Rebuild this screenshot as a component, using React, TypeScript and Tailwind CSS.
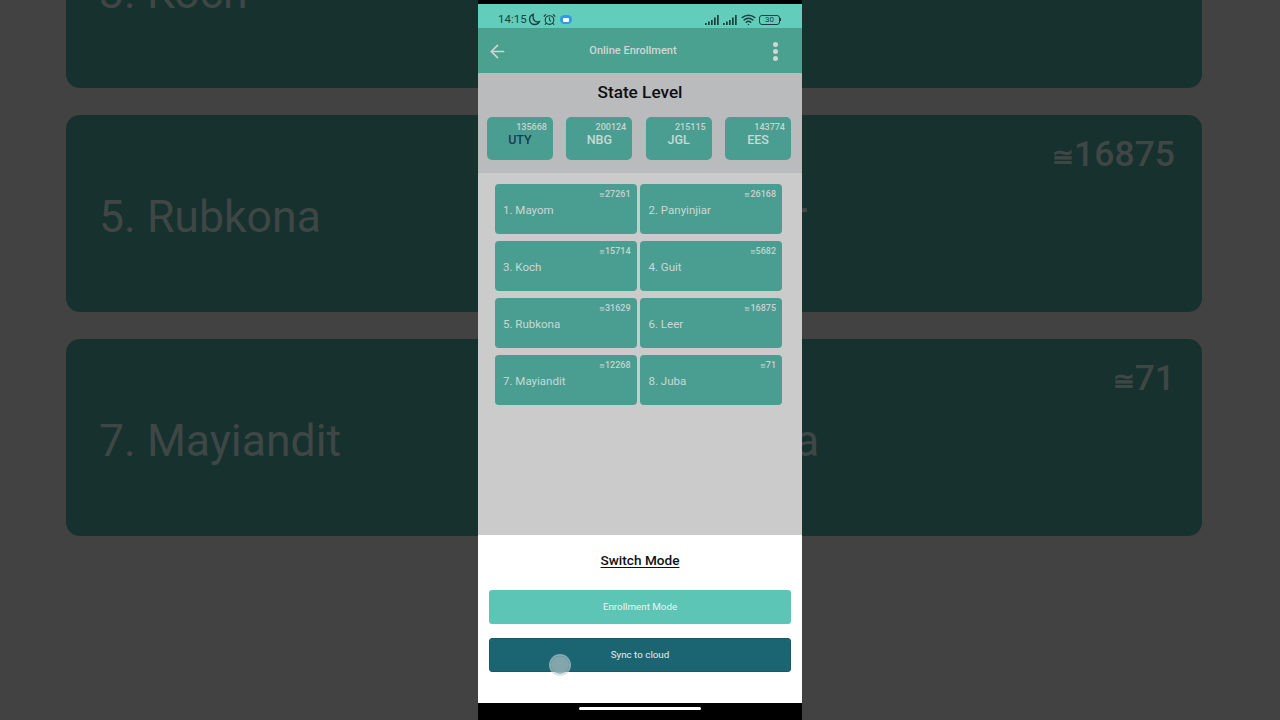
import { AlarmClock, ArrowLeft, Wifi } from 'lucide-react';

const districts = [
  { name: '1. Mayom', count: '27261' },
  { name: '2. Panyinjiar', count: '26168' },
  { name: '3. Koch', count: '15714' },
  { name: '4. Guit', count: '5682' },
  { name: '5. Rubkona', count: '31629' },
  { name: '6. Leer', count: '16875' },
  { name: '7. Mayiandit', count: '12268' },
  { name: '8. Juba', count: '71' },
];

const states = [
  { code: 'UTY', count: '135668', dark: true },
  { code: 'NBG', count: '200124' },
  { code: 'JGL', count: '215115' },
  { code: 'EES', count: '143774' },
];

function SignalBars() {
  return (
    <svg width="15" height="10" viewBox="0 0 15 10" fill="currentColor">
      <rect x="0" y="8" width="1.7" height="2" />
      <rect x="3" y="6.5" width="1.7" height="3.5" />
      <rect x="6" y="5" width="1.7" height="5" />
      <rect x="9" y="2.5" width="1.7" height="7.5" />
      <rect x="12" y="0" width="1.7" height="10" />
    </svg>
  );
}

function MoonGlyph() {
  return (
    <svg width="13" height="13" viewBox="0 0 13 13" fill="none" stroke="currentColor" strokeWidth="1.4" strokeLinecap="round">
      <path d="M5.2 1.4C2.9 2.3 1.4 4.4 1.6 6.9c.2 2.6 2.4 4.6 5 4.6 2 0 3.8-1.1 4.7-2.9-2.8.7-5.2-.6-6-3-.3-1.5-.4-3 -.1-4.2z" />
    </svg>
  );
}

// the blurred, enlarged copy of the video behind the phone
function BackdropCard({ name, count }: { name?: string; count?: string }) {
  return (
    <div className="h-[197px] rounded-[14px] bg-[#17312e] pt-[19px] pr-[27px] pl-[33px] text-[#3f4746]">
      <div className="flex h-[42px] items-center justify-end text-[35.5px] leading-none font-medium">
        {count && (
          <span>
            <span className="text-[26px] font-bold">≅</span>
            {count}
          </span>
        )}
      </div>
      <div className="mt-[15px] text-[44.6px] leading-[52px]">{name}</div>
    </div>
  );
}

export default function App() {
  return (
    <div className="relative h-[720px] w-[1280px] overflow-hidden bg-[#424242] font-['Roboto',sans-serif]">
      {/* Backdrop */}
      <div className="mt-[-109px] ml-[66px] grid w-[1136px] grid-cols-2 gap-x-[12px] gap-y-[27px]">
        <BackdropCard name="3. Koch" />
        <BackdropCard count="5682" />
        <BackdropCard name="5. Rubkona" />
        <BackdropCard name="6. Leer" count="16875" />
        <BackdropCard name="7. Mayiandit" />
        <BackdropCard name="8. Juba" count="71" />
      </div>

      {/* Phone */}
      <div className="absolute inset-y-0 left-[478px] flex w-[324px] flex-col bg-black pt-[4px]">
        <div className="flex h-[24px] shrink-0 items-center justify-between bg-[#62cdbb] pt-[7px] pr-[21px] pl-[20px] text-[#1c3f3c]">
          <div className="flex items-center">
            <span className="text-[11.5px]">14:15</span>
            <span className="ml-[1px]">
              <MoonGlyph />
            </span>
            <AlarmClock size={13} strokeWidth={2} className="ml-[2px]" />
            <span className="ml-[4px] flex h-[9px] w-[12px] items-center justify-center rounded-full bg-[#2f9be6]">
              <span className="h-[4px] w-[6px] rounded-[1px] bg-white" />
            </span>
          </div>
          <div className="flex items-center">
            <SignalBars />
            <span className="ml-[3px]">
              <SignalBars />
            </span>
            <Wifi size={15} strokeWidth={2.4} className="ml-[3px]" />
            <div className="ml-[3px] flex items-center">
              <span className="flex h-[10px] w-[21px] items-center justify-center rounded-[3px] border border-[#1c3f3c] text-[8px] leading-none">
                30
              </span>
              <span className="h-[3px] w-[1px] bg-[#1c3f3c]" />
            </div>
          </div>
        </div>

        <div className="flex h-[45px] shrink-0 items-center bg-[#4ba18f] pt-[1px] pr-[24px] pl-[9px] text-[#d2d6d5]">
          <ArrowLeft size={21} strokeWidth={1.8} />
          <span className="flex-1 pt-[1px] pr-[15px] text-center text-[11px] font-medium">Online Enrollment</span>
          <div className="flex flex-col gap-[2px]">
            <span className="h-[5px] w-[5px] rounded-full bg-[#d2d6d5]" />
            <span className="h-[5px] w-[5px] rounded-full bg-[#d2d6d5]" />
            <span className="h-[5px] w-[5px] rounded-full bg-[#d2d6d5]" />
          </div>
        </div>

        <div className="h-[100px] shrink-0 bg-[#b9bbbd] pr-[11px] pl-[9px]">
          <h1 className="pt-[9px] pl-[2px] text-center text-[17.2px] leading-[21px] font-medium text-[#0d0f10]">State Level</h1>
          <div className="mt-[14px] grid grid-cols-4 gap-x-[13.5px]">
            {states.map((s) => (
              <div key={s.code} className="flex h-[43px] flex-col rounded-[5px] bg-[#4a9e91] pt-[5px]">
                <span className="pr-[6px] text-right text-[9px] leading-[10px] font-medium text-[#c9d3d0]">{s.count}</span>
                <span
                  className={`mt-[1px] text-center text-[12.5px] leading-[14px] font-medium ${
                    s.dark ? 'text-[#173a57]' : 'text-[#c9d8d5]'
                  }`}
                >
                  {s.code}
                </span>
              </div>
            ))}
          </div>
        </div>

        <div className="flex-1 bg-[#cbcbcb] pt-[11px] pr-[20px] pl-[16.5px]">
          <div className="grid grid-cols-2 gap-x-[3.5px] gap-y-[7px]">
            {districts.map((d) => (
              <div key={d.name} className="h-[50px] rounded-[4px] bg-[#4a9e91] pt-[5px] pr-[6px] pl-[8.5px]">
                <div className="text-right text-[9px] leading-[10px] font-medium text-[#c9d3d0]">
                  <span className="text-[7px]">≅</span>
                  {d.count}
                </div>
                <div className="mt-[3px] text-[11.5px] leading-[14px] text-[#c9d8d5]">{d.name}</div>
              </div>
            ))}
          </div>
        </div>

        {/* Bottom sheet */}
        <div className="relative h-[168px] shrink-0 bg-white px-[11px] pt-[17px]">
          <h2 className="text-center text-[13.6px] leading-[17px] font-medium text-[#111] underline underline-offset-2">
            Switch Mode
          </h2>
          <button className="mt-[21px] flex h-[34px] w-full items-center justify-center rounded-[3px] bg-[#5cc5b6] text-[9.8px] text-[#e8f6f3]">
            Enrollment Mode
          </button>
          <button className="mt-[14px] flex h-[34px] w-full items-center justify-center rounded-[3px] border border-[#175a66] bg-[#1b6572] text-[9.8px] text-[#e3eef0]">
            Sync to cloud
          </button>
          <span className="absolute top-[121px] left-[73px] h-[18px] w-[18px] rounded-full bg-[#8fadb2]/90 ring-2 ring-[#c9d6d9]/60" />
        </div>

        <div className="flex h-[17px] shrink-0 items-start justify-center pt-[4px]">
          <span className="h-[3px] w-[122px] rounded-full bg-white" />
        </div>
      </div>
    </div>
  );
}
